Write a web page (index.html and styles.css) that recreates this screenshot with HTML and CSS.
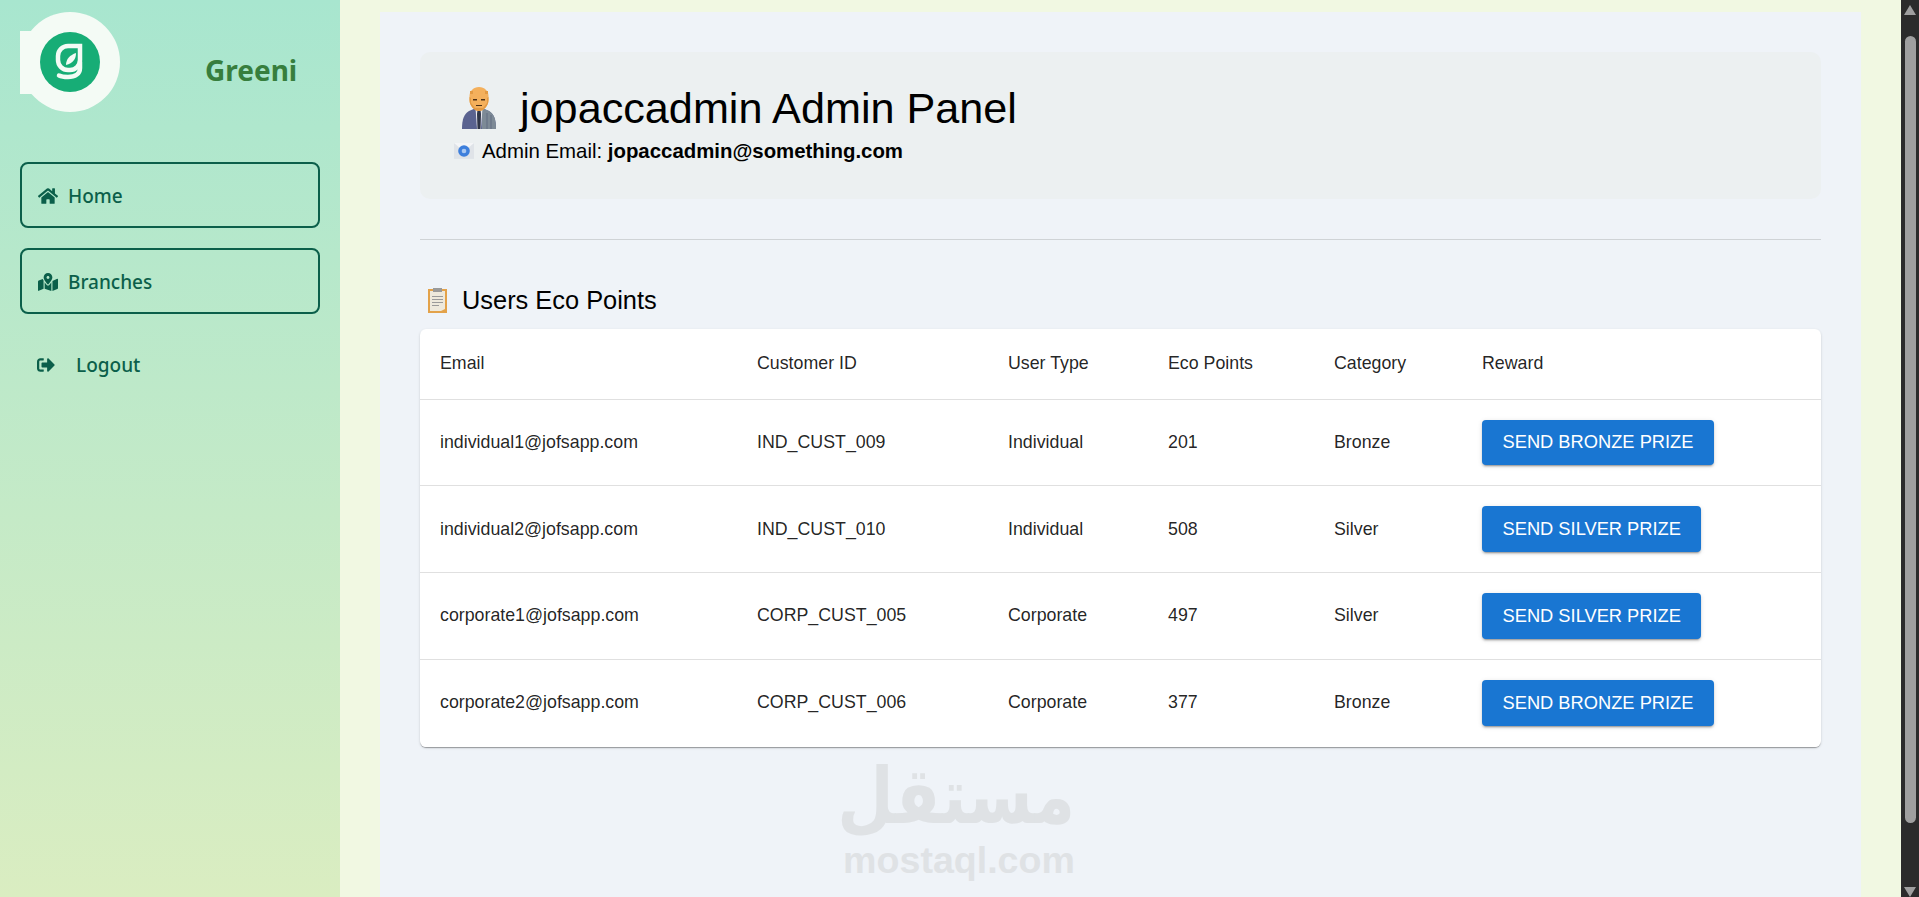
FILE: index.html
```html
<!DOCTYPE html>
<html>
<head>
  <meta charset="utf-8">
  <title>Greeni Admin Panel</title>
  <link rel="stylesheet" href="styles.css">
</head>
<body>
  <aside class="sidebar">
    <div class="brand">
      <svg class="brand-logo" viewBox="0 0 100 100">
        <path class="logo-bg" d="M0 19h15v63H0z"/>
        <circle class="logo-bg" cx="50" cy="50" r="50"/>
        <circle class="logo-disc" cx="50" cy="50" r="30"/>
        <path class="logo-g" d="M60 34H48a10 10 0 0 0-10 10v4a10 10 0 0 0 10 10h2a10 10 0 0 0 10-10z"/>
        <path class="logo-g" d="M60 50v6c0 6-5 9-12 9-3 0-6 0-9-1.500"/>
        <path class="logo-vein" d="M46 53c0-6 4-10 10-12 0 6-3 10-10 12z"/>
      </svg>
      <span class="brand-name">Greeni</span>
    </div>
    <nav class="nav">
      <a class="nav-btn">
        <svg class="nav-icon" viewBox="0 0 576 512"><path d="M280.37 148.26L96 300.11V464a16 16 0 0 0 16 16l112.06-.29a16 16 0 0 0 15.92-16V368a16 16 0 0 1 16-16h64a16 16 0 0 1 16 16v95.64a16 16 0 0 0 16 16.05L464 480a16 16 0 0 0 16-16V300L295.67 148.26a12.19 12.19 0 0 0-15.3 0zM571.6 251.47L488 182.56V44.05a12 12 0 0 0-12-12h-56a12 12 0 0 0-12 12v72.61L318.47 43a48 48 0 0 0-61 0L4.34 251.47a12 12 0 0 0-1.6 16.9l25.5 31A12 12 0 0 0 45.15 301l235.22-193.74a12.19 12.19 0 0 1 15.3 0L530.9 301a12 12 0 0 0 16.9-1.6l25.5-31a12 12 0 0 0-1.7-16.93z"/></svg>
        <span>Home</span>
      </a>
      <a class="nav-btn">
        <svg class="nav-icon" viewBox="0 0 576 512"><path d="M288 0c-69.59 0-126 56.41-126 126 0 56.26 82.35 158.8 113.9 196.02 6.39 7.54 17.82 7.54 24.2 0C331.65 284.8 414 182.26 414 126 414 56.41 357.59 0 288 0zm0 168c-23.2 0-42-18.8-42-42s18.8-42 42-42 42 18.8 42 42-18.8 42-42 42zM20.12 215.95A32.006 32.006 0 0 0 0 245.66v250.32c0 11.32 11.43 19.06 21.94 14.86L160 448V214.92c-8.84-15.98-16.07-31.54-21.25-46.42L20.12 215.95zM288 359.67c-14.07 0-27.38-6.18-36.51-16.96-19.66-23.2-40.57-49.62-59.49-76.72V448l192 64V266c-18.92 27.09-39.82 53.52-59.49 76.72-9.13 10.77-22.44 16.95-36.51 16.95zm266.06-198.51L416 224v288l139.88-55.95A31.996 31.996 0 0 0 576 426.34V176.02c0-11.32-11.43-19.06-21.94-14.86z"/></svg>
        <span>Branches</span>
      </a>
      <a class="nav-logout">
        <svg class="nav-icon" viewBox="0 0 512 512"><path d="M497 273L329 441c-15 15-41 4.500-41-17v-96H152c-13.300 0-24-10.700-24-24v-96c0-13.300 10.700-24 24-24h136V88c0-21.400 25.900-32 41-17l168 168c9.300 9.400 9.300 24.600 0 34zM192 436v-40c0-6.600-5.400-12-12-12H96c-17.700 0-32-14.300-32-32V160c0-17.700 14.300-32 32-32h84c6.600 0 12-5.400 12-12V76c0-6.600-5.400-12-12-12H96c-53 0-96 43-96 96v192c0 53 43 96 96 96h84c6.600 0 12-5.400 12-12z"/></svg>
        <span>Logout</span>
      </a>
    </nav>
  </aside>

  <main class="main">
    <div class="panel">
      <section class="admin-card">
        <h1 class="admin-title">
          <svg class="emoji-man" viewBox="0 0 34 42">
            <path fill="#5a6390" d="M0 42c0-10 2-15 7-18l7-3h6l7 3c5 3 7 8 7 18z"/>
            <path fill="#7d8a96" d="M20 21l7 3c5 3 7 8 7 18H20z"/>
            <path fill="#6f7b8c" d="M24 26h2v16h-2zM28 28h2v14h-2z"/>
            <path fill="#e8e8ee" d="M13.500 21h7l-1.500 21h-4z"/>
            <path fill="#2f3547" d="M15.500 23h3l.5 4-.5 15h-3l-.5-15z"/>
            <path fill="#f4b05c" d="M7.500 9c0-5 4-9 9.500-9s9.500 4 9.500 9v4c0 6-5 11-9.500 11s-9.500-5-9.500-11z"/>
            <path fill="#e39a43" d="M7.500 10l1.500 1v5l4 5h8l4-5v-5l1.500-1v3c0 6-5 11-9.500 11s-9.500-5-9.500-11z"/>
            <path fill="#e39a43" d="M8 4h3v3H8zM23 4h3v3h-3z"/>
            <path fill="#4d3015" d="M11 12h4v1.500h-4zM19 12h4v1.500h-4zM14 18h6v1h-6z"/>
          </svg>
          <span>jopaccadmin Admin Panel</span>
        </h1>
        <p class="admin-email">
          <svg class="emoji-mail" viewBox="0 0 19 15">
            <path fill="#dfe3e8" d="M0 0h19v15H0z"/>
            <path fill="#f4f5f7" d="M0 0h19l-9.500 8z"/>
            <circle fill="#3d7fdc" cx="9.500" cy="7.500" r="5.500"/>
            <circle fill="#a9c8f2" cx="9.500" cy="7.500" r="2.200"/>
          </svg>
          <span>Admin Email: <strong>jopaccadmin@something.com</strong></span>
        </p>
      </section>

      <hr class="divider">

      <h2 class="section-title">
        <svg class="emoji-clip" viewBox="0 0 19 25">
          <path fill="#e3a24a" d="M0 1h19v24H0z"/>
          <path fill="#eee9dc" d="M2 3h15v18l-4 2H2z"/>
          <path fill="#9a9a9a" d="M5 0h9v4H5zM4 8h11v1H4zM4 11h11v1H4zM4 14h11v1H4zM4 17h7v1H4z"/>
        </svg>
        <span>Users Eco Points</span>
      </h2>

      <div class="table-card">
        <table class="points-table">
          <thead>
            <tr>
              <th class="col-email">Email</th>
              <th class="col-id">Customer ID</th>
              <th class="col-type">User Type</th>
              <th class="col-points">Eco Points</th>
              <th class="col-cat">Category</th>
              <th>Reward</th>
            </tr>
          </thead>
          <tbody>
            <tr>
              <td>individual1@jofsapp.com</td>
              <td>IND_CUST_009</td>
              <td>Individual</td>
              <td>201</td>
              <td>Bronze</td>
              <td><button class="prize-btn">SEND BRONZE PRIZE</button></td>
            </tr>
            <tr>
              <td>individual2@jofsapp.com</td>
              <td>IND_CUST_010</td>
              <td>Individual</td>
              <td>508</td>
              <td>Silver</td>
              <td><button class="prize-btn">SEND SILVER PRIZE</button></td>
            </tr>
            <tr>
              <td>corporate1@jofsapp.com</td>
              <td>CORP_CUST_005</td>
              <td>Corporate</td>
              <td>497</td>
              <td>Silver</td>
              <td><button class="prize-btn">SEND SILVER PRIZE</button></td>
            </tr>
            <tr>
              <td>corporate2@jofsapp.com</td>
              <td>CORP_CUST_006</td>
              <td>Corporate</td>
              <td>377</td>
              <td>Bronze</td>
              <td><button class="prize-btn">SEND BRONZE PRIZE</button></td>
            </tr>
          </tbody>
        </table>
      </div>

      <div class="watermark">
        <div class="watermark-ar" lang="ar" dir="rtl">مستقل</div>
        <div class="watermark-en">mostaql.com</div>
      </div>
    </div>
  </main>

  <div class="scrollbar">
    <span class="scroll-up"></span>
    <span class="scroll-thumb"></span>
    <span class="scroll-down"></span>
  </div>
</body>
</html>
```

FILE: styles.css
```css
* {
  box-sizing: border-box;
  margin: 0;
  padding: 0;
}

body {
  display: flex;
  height: 897px;
  overflow: hidden;
  font-family: "Liberation Sans", Arial, sans-serif;
  background: #f1f8e2;
  color: #000;
}

/* Sidebar */
.sidebar {
  width: 340px;
  flex-shrink: 0;
  padding: 12px 20px;
  background: linear-gradient(180deg, #a8e6cf 0%, #daedc1 100%);
  font-family: "Noto Sans", "Open Sans", sans-serif;
}

.brand {
  display: flex;
  align-items: center;
  height: 100px;
  margin-bottom: 50px;
}

.brand-logo {
  width: 100px;
  height: 100px;
  flex-shrink: 0;
}

.logo-bg {
  fill: #f4fbf5;
}

.logo-disc {
  fill: #17ad76;
}

.logo-g {
  fill: none;
  stroke: #f4fbf5;
  stroke-width: 4.500;
  stroke-linecap: round;
}

.logo-vein {
  fill: #f4fbf5;
}

.brand-name {
  margin: 16px 0 0 85px;
  font-size: 28px;
  font-weight: 700;
  color: #377e3d;
}

.nav {
  display: flex;
  flex-direction: column;
  gap: 20px;
}

.nav-btn {
  display: flex;
  align-items: center;
  gap: 10px;
  width: 300px;
  height: 66px;
  padding: 2px 16px 0;
  border: 2px solid #0b5f4a;
  border-radius: 8px;
  font-size: 19px;
  font-weight: 500;
  color: #0b5f4a;
}

.nav-logout {
  display: flex;
  align-items: center;
  gap: 20px;
  height: 61px;
  padding: 0 16px;
  font-size: 19px;
  font-weight: 500;
  color: #0b5f4a;
}

.nav-icon {
  width: 20px;
  height: 18px;
  fill: #0b5f4a;
}

/* Main content */
.main {
  flex: 1;
  min-width: 0;
  padding: 12px 40px 0;
}

.panel {
  position: relative;
  height: 900px;
  padding: 40px;
  background: #eff3f8;
}

.admin-card {
  height: 147px;
  padding: 32px 34px;
  border-radius: 10px;
  background: #ecf0f1;
}

.admin-title {
  display: flex;
  align-items: center;
  gap: 24px;
  font-size: 43.200px;
  font-weight: 400;
  line-height: 48px;
  padding-left: 8px;
}

.emoji-man {
  width: 34px;
  height: 42px;
}

.admin-email {
  display: flex;
  align-items: center;
  gap: 8px;
  margin-top: 7px;
  font-size: 20.400px;
  line-height: 24px;
}

.emoji-mail {
  width: 20px;
  height: 16px;
}

.divider {
  margin-top: 40px;
  border: none;
  border-top: 1px solid #cfd3d6;
}

.section-title {
  display: flex;
  align-items: center;
  gap: 15px;
  margin-top: 45px;
  padding-left: 8px;
  font-size: 25.400px;
  font-weight: 400;
  line-height: 30px;
}

.emoji-clip {
  width: 19px;
  height: 25px;
}

.table-card {
  margin-top: 14px;
  border-radius: 6px;
  background: #fff;
  box-shadow: 0 2px 1px -1px rgba(0,0,0,0.2), 0 1px 1px rgba(0,0,0,0.14), 0 1px 3px rgba(0,0,0,0.12);
  overflow: hidden;
}

.points-table {
  width: 100%;
  border-collapse: collapse;
  table-layout: fixed;
  font-size: 17.800px;
  color: rgba(0,0,0,0.87);
}

.points-table th,
.points-table td {
  padding: 20px;
  text-align: left;
  font-weight: 400;
  border-bottom: 1px solid #e0e0e0;
}

.points-table th {
  height: 70px;
}

.points-table td {
  height: 86.750px;
}

.points-table tbody tr:last-child td {
  border-bottom-color: #fff;
}

.col-email { width: 317px; }
.col-id { width: 251px; }
.col-type { width: 160px; }
.col-points { width: 166px; }
.col-cat { width: 148px; }

.prize-btn {
  display: block;
  height: 45.750px;
  padding: 0 20.500px;
  border: none;
  border-radius: 4px;
  background: #1976d2;
  color: #fff;
  font-family: inherit;
  font-size: 18.300px;
  font-weight: 400;
  white-space: nowrap;
  cursor: pointer;
  box-shadow: 0 3px 1px -2px rgba(0,0,0,0.2), 0 2px 2px rgba(0,0,0,0.14), 0 1px 5px rgba(0,0,0,0.12);
}

/* Watermark sits over the page */
.watermark {
  position: absolute;
  left: 463px;
  top: 754px;
  width: 232px;
  text-align: center;
  color: #dfe2e5;
  font-weight: 700;
}

.watermark-ar {
  font-family: "DejaVu Sans", sans-serif;
  font-size: 65px;
  line-height: 76px;
  transform: scaleY(1.2);
  transform-origin: bottom;
}

.watermark-en {
  font-size: 37.600px;
  line-height: 36px;
}

/* Drawn scrollbar */
.scrollbar {
  display: flex;
  flex-direction: column;
  align-items: center;
  width: 18px;
  flex-shrink: 0;
  background: #2b2b2b;
}

.scroll-up,
.scroll-down {
  width: 0;
  height: 0;
  border-left: 6px solid transparent;
  border-right: 6px solid transparent;
}

.scroll-up {
  margin-top: 5px;
  border-bottom: 10px solid #9f9f9f;
}

.scroll-thumb {
  width: 11px;
  height: 788px;
  margin-top: 21px;
  border-radius: 6px;
  background: #9f9f9f;
}

.scroll-down {
  margin-top: 64px;
  border-top: 10px solid #9f9f9f;
}
```
